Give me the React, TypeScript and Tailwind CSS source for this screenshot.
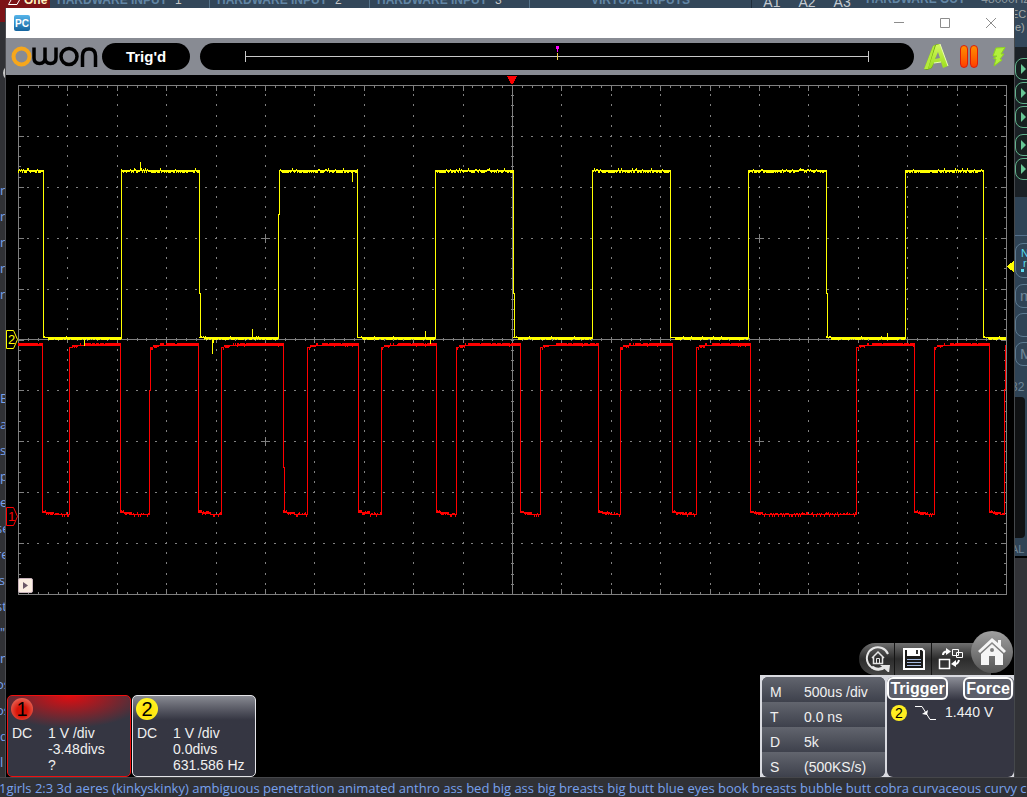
import type { ReactNode } from "react";

const GRID = { left: 18, right: 1006, top: 85, bottom: 594 };
const COL = (GRID.right - GRID.left) / 20;
const ROW = (GRID.bottom - GRID.top) / 10;

// small repeatable noise source so the traces look the same on every render
function makeNoise(seed: number) {
  let s = seed;
  return () => {
    s = (s * 1664525 + 1013904223) % 4294967296;
    return s / 4294967296;
  };
}

const col = (x: number, y1: number, y2: number) => `M${x + 0.5} ${y1}V${y2}`;

function gridDots() {
  let d = "";
  for (let c = 1; c < 20; c++) {
    if (c === 10) continue;
    const x = Math.round(GRID.left + c * COL);
    for (let i = 1; i < 50; i++) {
      const y = Math.round(GRID.top + (i * ROW) / 5);
      d += col(x, y - 1, y + 1);
    }
  }
  for (let r = 1; r < 10; r++) {
    if (r === 5) continue;
    const y = Math.round(GRID.top + r * ROW) + 0.5;
    for (let i = 1; i < 100; i++) {
      const x = Math.round(GRID.left + (i * COL) / 5);
      d += `M${x - 1} ${y}h2`;
    }
  }
  return d;
}

function gridTicks() {
  let d = "";
  for (let i = 1; i < 100; i++) {
    const x = Math.round(GRID.left + (i * COL) / 5);
    const len = i % 5 === 0 ? 5 : 2;
    d += col(x, GRID.top, GRID.top + len + 1);
    d += col(x, GRID.bottom - len, GRID.bottom);
    d += i % 5 === 0 ? col(x, 337, 343) : col(x, 338, 341);
  }
  for (let i = 1; i < 50; i++) {
    const y = Math.round(GRID.top + (i * ROW) / 5) + 0.5;
    const len = i % 5 === 0 ? 5 : 2;
    d += `M${GRID.left} ${y}h${len + 1}M${GRID.right - len} ${y}h${len}M511 ${y}h3`;
  }
  // crosses in the quarter points
  for (const x of [265, 759]) {
    for (const y of [238, 441]) d += `M${x - 4} ${y + 0.5}h9M${x + 0.5} ${y - 4}v9`;
  }
  return d;
}

// [start, end] of every high level
const CH2_HIGH = [[18, 43], [121, 199], [279, 357], [435, 513], [592, 670], [748, 826], [905, 983]];
const CH1_HIGH = [
  [18, 42], [69, 120], [150, 198], [221, 283], [307, 358], [381, 436], [456, 520],
  [540, 598], [620, 672], [696, 750], [856, 914], [934, 989],
];

function channel2() {
  const rnd = makeNoise(7);
  let d = "";
  CH2_HIGH.forEach(([a, b], i) => {
    for (let x = a; x <= b; x++) {
      const r = rnd();
      d += col(x, r > 0.95 ? 168 : r > 0.85 ? 169 : 170, r < 0.5 ? 173 : r < 0.85 ? 172 : 171);
    }
    const next = CH2_HIGH[i + 1] ? CH2_HIGH[i + 1][0] : 1006;
    for (let x = b; x < next; x++) {
      const r = rnd();
      if (x < b + 5) d += col(x, r > 0.7 ? 336 : 337, 338);
      else d += col(x, r > 0.96 ? 336 : 337, r < 0.8 ? 340 : 339);
    }
    if (i > 0 && a !== 279) d += col(a, 171, 339);
    // some falling edges take two samples
    if ([199, 513, 826].includes(b)) d += col(b, 170, 294) + col(b + 1, 293, 338);
    else d += col(b, 170, 338);
  });
  d += col(279, 171, 215) + col(278, 214, 339);
  d += col(140, 162, 171) + col(84, 339, 346) + col(352, 171, 182) + col(212, 339, 354);
  d += col(213, 339, 343) + col(252, 329, 338) + col(425, 331, 338) + col(430, 338, 344) + col(887, 333, 338);
  return d;
}

function channel1() {
  const rnd = makeNoise(21);
  let d = "";
  CH1_HIGH.forEach(([a, b], i) => {
    for (let x = a; x <= b; x++) {
      const r = rnd();
      const age = i === 0 ? 99 : x - a;
      if (age < 3) d += col(x, 347, r < 0.5 ? 350 : 348);
      else if (age < 9) d += col(x, 345, r < 0.4 ? 348 : 347);
      else if (age < 16) d += col(x, r > 0.7 ? 343 : 345, 346);
      else d += col(x, r < 0.1 ? 344 : 343, r > 0.96 ? 347 : 346);
    }
    const next = CH1_HIGH[i + 1] ? CH1_HIGH[i + 1][0] : 1004;
    for (let x = b; x < next; x++) {
      const r = rnd();
      const age = x - b;
      if (age < 4) d += col(x, 510 + Math.round(r), 513);
      else if (age < 12) d += col(x, r > 0.8 ? 511 : 512, r < 0.5 ? 515 : 514);
      else d += col(x, r > 0.85 ? 512 : r > 0.55 ? 513 : 514, r < 0.25 ? 517 : 515);
    }
    if (a === 150) d += col(150, 347, 391) + col(149, 390, 515);
    else if (i > 0) d += col(a, 347, 515);
    if (b === 283) d += col(283, 343, 468) + col(284, 467, 512);
    else d += col(b, 343, 512);
  });
  return d + col(1004, 389, 515) + col(1005, 345, 390);
}

function Scope() {
  return (
    <svg viewBox="6 75 1008 556" className="block w-full" shapeRendering="crispEdges">
      <g fill="none" stroke="#808080" strokeWidth="1">
        <path d="M18.5 85.5H1006.5V594.5H18.5ZM18 339.5H1006M512.5 85V594" />
        <path d={gridDots()} />
        <path d={gridTicks()} />
      </g>
      <path d={channel1()} fill="none" stroke="#ff0000" />
      <path d={channel2()} fill="none" stroke="#ffff00" />
      <path d="M507 76h10l-4 8h-2z" fill="#ff0000" />
      <path d="M1014 261v11l-7-5v-1z" fill="#ffff00" />
      <g fill="#000" strokeWidth="1" shapeRendering="auto">
        <path d="M6.500 330.500h7l4 9l-4 9h-7z" stroke="#ffff00" />
        <path d="M6.500 507.500h7l4 9l-4 9h-7z" stroke="#ff0000" />
      </g>
      <g fontFamily="Liberation Sans, sans-serif" fontSize="13">
        <text x="8" y="344" fill="#ffff00">2</text>
        <text x="8" y="521" fill="#ff0000">1</text>
      </g>
    </svg>
  );
}

function OwonLogo() {
  return (
    <svg width="87" height="22" viewBox="11 45 87 22" fill="none" stroke="#000" strokeWidth="3.500" aria-label="owon">
      <circle cx="21.500" cy="55.500" r="8" stroke="#f6a71c" strokeWidth="4" />
      <path d="M34 46.500V57Q34 62.500 39.500 62.500Q45 62.500 45 57V46.500M45 57Q45 62.500 50.500 62.500Q56 62.500 56 57V46.500" />
      <circle cx="69" cy="55.500" r="8" />
      <path d="M82.500 66V55Q82.500 48 89 48Q95.500 48 95.500 55V66" />
    </svg>
  );
}

function TopStrip() {
  const title = "text-[12px] leading-[12px] font-bold text-[#6286a5] whitespace-nowrap";
  return (
    <div className="flex h-2 shrink-0 items-end overflow-hidden bg-[#33475a] font-['Liberation_Sans',Arial,sans-serif] text-[12px] leading-[12px]">
      <div className="flex h-2 w-[50px] shrink-0 items-end gap-1 bg-[#7c1317] pb-[2px] pl-2">
        <svg width="12" height="8" viewBox="0 0 12 8" className="-mb-[2px] self-end" fill="none" stroke="#fff">
          <path d="M3 0L.5 4.500H9L11.500 0" />
        </svg>
        <span className="font-bold text-[#fff3c0]">One</span>
      </div>
      {[1, 2, 3].map((n) => (
        <div key={n} className="flex w-40 shrink-0 gap-2 border-r border-[#56738a] pb-[2px] pl-[7px]">
          <span className={title}>HARDWARE INPUT</span>
          <span className="text-[#c8c8c8]">{n}</span>
        </div>
      ))}
      <div className="w-[222px] shrink-0 border-r border-[#1f2d3a] pb-[2px] text-center">
        <span className={title}>VIRTUAL INPUTS</span>
      </div>
      <div className="flex w-[110px] shrink-0 justify-center gap-[18px] text-[14px] text-[#c4cbd2]">
        <span>A1</span>
        <span>A2</span>
        <span>A3</span>
      </div>
      <div className="flex min-w-0 flex-1 gap-4 pb-[3px] pl-1">
        <span className={title}>HARDWARE OUT</span>
        <span className="text-[#8a979f]">48000Hz</span>
      </div>
    </div>
  );
}

const LEFT_WORDS = [
  "r", "r", "r", "r", "r", "", "", "", "B", "a", "s", "p", "e", "se", "re", "'s", "st", "\"", "n", "os", "os", "d", "l",
];

function LeftStrip() {
  return (
    <div className="w-[6px] shrink-0 overflow-hidden border-r border-[#4b4c50] bg-[#303135] font-['Open_Sans','Noto_Sans',sans-serif] text-[13px] text-[#78a2ee]">
      <div className="h-[14px] bg-[#7c1317]" />
      <div className="h-[155px] pt-[43px]">
        <div className="ml-[3px] size-4 rounded-full border-2 border-[#c9c9c9]" />
      </div>
      {LEFT_WORDS.map((w, i) => (
        <div key={i} className={`flex h-[26px] items-center leading-none ${w.length > 1 ? "-ml-1" : ""}`}>{w}</div>
      ))}
    </div>
  );
}

function PlayKey() {
  return (
    <div className="flex h-[22px] w-6 items-center rounded-lg border border-[#62b28c] bg-[#16201f] pl-1">
      <svg width="7" height="10" viewBox="0 0 7 10" fill="#68c795">
        <path d="M1 0L6 5L1 10Z" />
      </svg>
    </div>
  );
}

function RightStrip() {
  const key = "h-6 w-8 rounded-lg border border-[#5d7a90] pl-1 text-[15px] leading-[22px] text-[#6f8698]";
  return (
    <div className="flex w-[13px] shrink-0 flex-col overflow-hidden border-l border-[#45484b] bg-[#323337] font-['Liberation_Sans',Arial,sans-serif]">
      <div className="h-[39px] bg-[#33475a] text-[11px] leading-[13px] text-[#a3a9a6]">
        <div className="-ml-1">EC</div>
        <div>e)</div>
      </div>
      <div className="flex h-[150px] flex-col gap-[2px] bg-[#1b2126] pt-[11px]">
        <PlayKey />
        <PlayKey />
        <PlayKey />
        <div className="h-[2px]" />
        <PlayKey />
        <PlayKey />
      </div>
      <div className="flex h-[361px] shrink-0 flex-col bg-[#2f4355] text-[#6f8698]">
        <div className="h-[39px] border-b border-[#55708a]" />
        <div className="mt-[7px] h-[35px] w-8 rounded-lg border border-[#5d7a90] pl-[5px] text-[11px] leading-[10px] text-[#5bd8ec]">
          <div className="pt-1">N</div>
          <div className="pl-[2px]">r</div>
          <div className="mt-[1px] size-[3px] bg-[#5bd8ec]" />
        </div>
        <div className="mt-[6px] flex flex-col gap-[5px]">
          <div className={key}>m</div>
          <div className={key} />
          <div className={key}>M</div>
        </div>
        <div className="-ml-1 mt-[12px] text-[12px] leading-[18px]">32</div>
        <div className="mt-[1px] h-[142px] w-[10px] rounded-r-sm bg-[#101214]" />
        <div className="-ml-1 mt-[4px] text-[11px] leading-[14px]">AL</div>
        <div className="mt-auto h-[2px] bg-black" />
      </div>
    </div>
  );
}

function TitleBar() {
  const btn = "flex h-[30px] w-[46px] items-center justify-center";
  return (
    <header className="flex h-[30px] items-center justify-between bg-white pl-2">
      <div className="flex size-4 items-center justify-center rounded-[2px] bg-linear-to-b from-[#55b4ea] to-[#14659f] font-['Liberation_Sans',Arial,sans-serif] text-[10px] font-bold text-white">
        PC
      </div>
      <div className="flex">
        <button className={btn} aria-label="Minimize">
          <svg width="10" height="10" stroke="#8c8c8c"><path d="M0 4.500H10" /></svg>
        </button>
        <button className={btn} aria-label="Maximize">
          <svg width="10" height="10" stroke="#8c8c8c" fill="none"><path d="M.5 .5H9.500V9.500H.5Z" /></svg>
        </button>
        <button className={btn} aria-label="Close">
          <svg width="10" height="10" stroke="#8c8c8c"><path d="M0 0L10 10M10 0L0 10" /></svg>
        </button>
      </div>
    </header>
  );
}

function StatusBar() {
  return (
    <div className="flex h-[37px] items-center bg-[#888b93] pl-[5px] pr-2">
      <OwonLogo />
      <div className="ml-1 flex h-[27px] w-[88px] shrink-0 items-center justify-center rounded-full bg-black pt-px font-['Liberation_Sans',Arial,sans-serif] text-[15px] font-bold text-white">
        Trig'd
      </div>
      <div className="ml-[10px] flex h-[27px] flex-1 items-center rounded-full bg-black px-[45px]">
        <div className="relative flex h-[11px] flex-1 items-center border-x border-[#c8c8c8]">
          <div className="h-px w-full bg-[#c8c8c8]" />
          <div className="absolute left-1/2 top-[2px] h-[7px] w-px bg-[#f2cf4a]" />
          <div className="absolute -top-[5px] left-1/2 -ml-px size-[3px] bg-[#ff00ff]" />
          <div className="absolute -top-[2px] left-1/2 h-[3px] w-px bg-[#ff00ff]" />
        </div>
      </div>
      <div className="ml-[10px] flex items-center">
        <button aria-label="Auto">
          <svg width="26" height="28" viewBox="0 0 26 28">
            <defs>
              <linearGradient id="auto" x1="0" y1="0" x2="0" y2="1">
                <stop offset="0" stopColor="#d4f860" />
                <stop offset="1" stopColor="#9ade1c" />
              </linearGradient>
            </defs>
            <path d="M0 26L9 3L13 1L16 1L8 25L3 27Z" fill="#6faa0c" />
            <path d="M0 26L9 3L11 2L4 26Z" fill="#b4ea3c" />
            <path fillRule="evenodd" d="M12 2L16 1L24 23L19 25L17 19L10 20L7 25L4 26ZM14 9L11 16L16 15Z" fill="url(#auto)" />
            <path d="M16 1L24 23M17 19L10 20" stroke="#eaffb0" fill="none" />
          </svg>
        </button>
        <button className="ml-[10px] flex gap-[2px]" aria-label="Pause">
          <span className="h-[23px] w-2 rounded-full border border-[#dc1e0a] bg-linear-to-b from-[#ff8c00] to-[#ff3c00]" />
          <span className="h-[23px] w-2 rounded-full border border-[#dc1e0a] bg-linear-to-b from-[#ff8c00] to-[#ff3c00]" />
        </button>
        <button className="ml-[14px]" aria-label="Single">
          <svg width="14" height="20" viewBox="0 0 14 20" fill="#b2f03c" stroke="#8fd41f">
            <path d="M4 1L13 .5L9 7H12L8 12L10 13L2 19L4 12L1.500 11.500L5 9H1Z" />
          </svg>
        </button>
      </div>
    </div>
  );
}

type ChannelProps = { name: string; active?: boolean; rows: string[] };

function ChannelCard({ name, active, rows }: ChannelProps) {
  const look = active
    ? "border-[#f01010] bg-[radial-gradient(ellipse_80px_32px_at_50%_0%,#e00c10,#353642)]"
    : "border-[#e4e4e8] bg-linear-to-b from-[#888a92] via-[#353642] via-30% to-[#353642]";
  const badge = active
    ? "bg-[radial-gradient(circle_at_50%_60%,#d81408_30%,#f08a78)]"
    : "bg-[radial-gradient(circle_at_50%_60%,#ffd800,#ffff30)]";
  return (
    <section className={`h-[82px] w-[124px] rounded-[5px] border px-[3px] pt-[2px] ${look}`}>
      <div className={`size-[22px] rounded-full text-center text-[20px] leading-[22px] text-black ${badge}`}>{name}</div>
      <div className="mt-[5px] flex pl-px text-[14px] leading-4 text-[#f0f0f0]">
        <span className="w-9">DC</span>
        <div className="whitespace-nowrap">
          {rows.map((r) => (
            <div key={r}>{r}</div>
          ))}
        </div>
      </div>
    </section>
  );
}

function ToolButton({ label, className, children }: { label: string; className: string; children: ReactNode }) {
  return (
    <button aria-label={label} className={`flex h-8 items-center border-r border-[#151515] ${className}`}>
      {children}
    </button>
  );
}

function QuickBar() {
  return (
    <div className="flex h-11 items-start justify-end pr-px">
      <div className="mt-3 flex rounded-l-full bg-linear-to-b from-[#707070] via-[#2c2c2c] via-50% to-[#454545]">
        <ToolButton label="Restore default" className="w-9 pl-[6px]">
          <svg width="26" height="26" viewBox="0 0 26 26" fill="none" stroke="#e6e6e6">
            <path d="M23 8A11 11 0 1 0 18 22" strokeWidth="2" />
            <path d="M15 19H25L24 27Z" fill="#e6e6e6" stroke="none" />
            <path d="M7 21Q14 26 21 20" strokeWidth="3" />
            <path d="M7 12L13 6L19 12M8.500 11V17.500H17.500V11" strokeWidth="1.500" />
            <path d="M11.500 17V12.500H14.500V17" />
          </svg>
        </ToolButton>
        <ToolButton label="Save" className="w-[37px] pl-2">
          <svg width="22" height="22" viewBox="0 0 22 22">
            <path d="M1 1H19L21 3V21H1Z" fill="#1a1a1a" stroke="#fff" strokeWidth="2" />
            <path d="M4 1H17V8H4Z" fill="#fff" />
            <path d="M13 2H15V6H13Z" fill="#333" />
            <path d="M4 11.500H18M4 14.500H18M4 17.500H18" stroke="#a8bce0" />
          </svg>
        </ToolButton>
        <ToolButton label="Swap view" className="w-[59px] border-r-0 pl-[6px]">
          <svg width="26" height="22" viewBox="0 0 26 22" fill="none" stroke="#fff">
            <path d="M1.500 11.500H11.500V20.500H1.500Z" strokeWidth="1.500" />
            <path d="M14.500 1.500H20.500V7.500H14.500ZM18.500 4.500H24.500V9.500H18.500Z" />
            <path d="M5 7Q5 3.500 9 3.500" strokeWidth="2" />
            <path d="M8 0L13 3.500L8 7Z" fill="#fff" stroke="none" />
            <path d="M21 12Q20 16 17 16" strokeWidth="2" />
            <path d="M18 12L13 16L18 19Z" fill="#fff" stroke="none" />
          </svg>
        </ToolButton>
      </div>
      <button
        aria-label="Home"
        className="-ml-5 flex size-[42px] items-center justify-center rounded-full bg-linear-to-b from-[#a0a0a0] to-[#555555]"
      >
        <svg width="30" height="30" viewBox="0 0 30 30" fill="#f5f5f5">
          <path d="M15 1L1 14L3 16L15 5L27 16L29 14L24 9V3H21V6Z" />
          <path fillRule="evenodd" d="M15 7L4 17V28H12V19H18V28H26V17ZM15 11A2 2 0 1 1 15 15A2 2 0 1 1 15 11Z" />
        </svg>
      </button>
    </div>
  );
}

const TIMEBASE = [
  ["M", "500us /div"],
  ["T", "0.0 ns"],
  ["D", "5k"],
  ["S", "(500KS/s)"],
];

function TimebasePanel() {
  return (
    <table className="w-[123px] overflow-hidden rounded-md bg-[#454853] text-left text-[14px] leading-[20px] text-[#f0f0f0]">
      <tbody>
        {TIMEBASE.map(([k, v]) => (
          <tr key={k} className="h-[25px] bg-linear-to-b from-[#62656e] to-[#3e414c]">
            <th className="w-10 p-0 pt-[5px] pl-2 font-normal">{k}</th>
            <td className="p-0 pt-[5px] pl-[2px]">{v}</td>
          </tr>
        ))}
      </tbody>
    </table>
  );
}

function TriggerPanel() {
  const btn = "h-[23px] rounded-md border-2 border-white bg-[#5c5e69] text-[16px] leading-[19px] font-bold text-white";
  return (
    <section className="w-[127px] rounded-md bg-[#353642]">
      <div className="flex justify-between rounded-t-md bg-linear-to-b from-[#8d8f98] to-[#353642] pr-px">
        <button className={`w-[61px] ${btn}`}>Trigger</button>
        <button className={`w-[50px] ${btn}`}>Force</button>
      </div>
      <div className="mt-[2px] flex items-center pl-1 text-[14px] text-[#f0f0f0]">
        <span className="size-4 rounded-full bg-[#ffee20] text-center text-[14px] leading-4 text-black">2</span>
        <svg width="22" height="16" viewBox="0 0 22 16" className="ml-2" fill="none" stroke="#fff">
          <path d="M0 1.500H7L15 14.500H21" />
          <path d="M13 5L12 10L7 9Z" fill="#fff" stroke="none" />
        </svg>
        <span className="ml-2">1.440 V</span>
      </div>
    </section>
  );
}

export default function App() {
  return (
    <div className="flex min-h-screen flex-col overflow-hidden bg-[#303135]">
      <TopStrip />
      <div className="flex">
        <LeftStrip />
        <main className="min-w-0 flex-1 bg-black">
          <TitleBar />
          <StatusBar />
          <div className="relative">
            <Scope />
            <button
              aria-label="Expand"
              className="absolute bottom-[38px] left-3 flex size-[15px] items-center justify-center rounded-[2px] border border-[#c9b4bc] bg-[#fbeee2]"
            >
              <svg width="5" height="7" fill="#6b5868"><path d="M0 0L5 3.500L0 7Z" /></svg>
            </button>
          </div>
          <div className="flex items-end justify-between font-['Liberation_Sans',Arial,sans-serif]">
            <div className="flex gap-px pl-px">
              <ChannelCard name="1" active rows={["1 V /div", "-3.48divs", "?"]} />
              <ChannelCard name="2" rows={["1 V /div", "0.0divs", "631.586 Hz"]} />
            </div>
            <div>
              <QuickBar />
              <div className="flex gap-[2px] bg-[#d9dae0] pl-[2px] pt-[2px]">
                <TimebasePanel />
                <TriggerPanel />
              </div>
            </div>
          </div>
        </main>
        <RightStrip />
      </div>
      <footer className="-ml-px h-5 overflow-hidden border-t border-[#45464a] font-['Open_Sans','Noto_Sans',sans-serif] text-[13px] leading-[20px] whitespace-nowrap text-[#78a2ee]">
        1girls 2:3 3d aeres (kinkyskinky) ambiguous penetration animated anthro ass bed big ass big breasts big butt blue
        eyes book breasts bubble butt cobra curvaceous curvy cu
      </footer>
    </div>
  );
}
